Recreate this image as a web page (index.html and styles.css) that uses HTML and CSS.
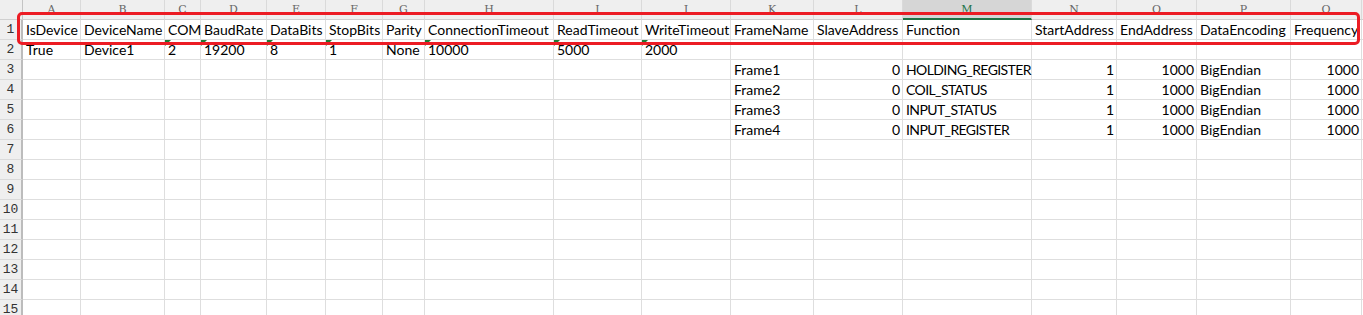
FILE: index.html
```html
<!DOCTYPE html>
<html>
<head>
<meta charset="utf-8">
<link rel="stylesheet" href="styles.css">
</head>
<body>
<div class="sheet">
  <div class="grid">
    <div class="corner"></div>
    <div class="h">A</div><div class="h">B</div><div class="h">C</div><div class="h">D</div><div class="h">E</div><div class="h">F</div><div class="h">G</div><div class="h">H</div><div class="h">I</div><div class="h">J</div><div class="h">K</div><div class="h">L</div><div class="h sel">M</div><div class="h">N</div><div class="h">O</div><div class="h">P</div><div class="h">Q</div><div class="h"></div>

    <div class="r">1</div>
    <div class="c">IsDevice</div><div class="c">DeviceName</div><div class="c">COM</div><div class="c">BaudRate</div><div class="c">DataBits</div><div class="c">StopBits</div><div class="c">Parity</div><div class="c">ConnectionTimeout</div><div class="c">ReadTimeout</div><div class="c">WriteTimeout</div><div class="c">FrameName</div><div class="c">SlaveAddress</div><div class="c">Function</div><div class="c">StartAddress</div><div class="c">EndAddress</div><div class="c">DataEncoding</div><div class="c">Frequency</div><div class="c"></div>

    <div class="r">2</div>
    <div class="c">True</div><div class="c">Device1</div><div class="c t">2</div><div class="c t">19200</div><div class="c t">8</div><div class="c t">1</div><div class="c">None</div><div class="c t">10000</div><div class="c t">5000</div><div class="c t">2000</div><div class="c"></div><div class="c"></div><div class="c"></div><div class="c"></div><div class="c"></div><div class="c"></div><div class="c"></div><div class="c"></div>

    <div class="r">3</div>
    <div class="c"></div><div class="c"></div><div class="c"></div><div class="c"></div><div class="c"></div><div class="c"></div><div class="c"></div><div class="c"></div><div class="c"></div><div class="c"></div><div class="c">Frame1</div><div class="c n">0</div><div class="c fn">HOLDING_REGISTER</div><div class="c n">1</div><div class="c n">1000</div><div class="c">BigEndian</div><div class="c n">1000</div><div class="c"></div>

    <div class="r">4</div>
    <div class="c"></div><div class="c"></div><div class="c"></div><div class="c"></div><div class="c"></div><div class="c"></div><div class="c"></div><div class="c"></div><div class="c"></div><div class="c"></div><div class="c">Frame2</div><div class="c n">0</div><div class="c fn">COIL_STATUS</div><div class="c n">1</div><div class="c n">1000</div><div class="c">BigEndian</div><div class="c n">1000</div><div class="c"></div>

    <div class="r">5</div>
    <div class="c"></div><div class="c"></div><div class="c"></div><div class="c"></div><div class="c"></div><div class="c"></div><div class="c"></div><div class="c"></div><div class="c"></div><div class="c"></div><div class="c">Frame3</div><div class="c n">0</div><div class="c fn">INPUT_STATUS</div><div class="c n">1</div><div class="c n">1000</div><div class="c">BigEndian</div><div class="c n">1000</div><div class="c"></div>

    <div class="r">6</div>
    <div class="c"></div><div class="c"></div><div class="c"></div><div class="c"></div><div class="c"></div><div class="c"></div><div class="c"></div><div class="c"></div><div class="c"></div><div class="c"></div><div class="c">Frame4</div><div class="c n">0</div><div class="c fn">INPUT_REGISTER</div><div class="c n">1</div><div class="c n">1000</div><div class="c">BigEndian</div><div class="c n">1000</div><div class="c"></div>

    <div class="r">7</div>
    <div class="c"></div><div class="c"></div><div class="c"></div><div class="c"></div><div class="c"></div><div class="c"></div><div class="c"></div><div class="c"></div><div class="c"></div><div class="c"></div><div class="c"></div><div class="c"></div><div class="c"></div><div class="c"></div><div class="c"></div><div class="c"></div><div class="c"></div><div class="c"></div>

    <div class="r">8</div>
    <div class="c"></div><div class="c"></div><div class="c"></div><div class="c"></div><div class="c"></div><div class="c"></div><div class="c"></div><div class="c"></div><div class="c"></div><div class="c"></div><div class="c"></div><div class="c"></div><div class="c"></div><div class="c"></div><div class="c"></div><div class="c"></div><div class="c"></div><div class="c"></div>

    <div class="r">9</div>
    <div class="c"></div><div class="c"></div><div class="c"></div><div class="c"></div><div class="c"></div><div class="c"></div><div class="c"></div><div class="c"></div><div class="c"></div><div class="c"></div><div class="c"></div><div class="c"></div><div class="c"></div><div class="c"></div><div class="c"></div><div class="c"></div><div class="c"></div><div class="c"></div>

    <div class="r">10</div>
    <div class="c"></div><div class="c"></div><div class="c"></div><div class="c"></div><div class="c"></div><div class="c"></div><div class="c"></div><div class="c"></div><div class="c"></div><div class="c"></div><div class="c"></div><div class="c"></div><div class="c"></div><div class="c"></div><div class="c"></div><div class="c"></div><div class="c"></div><div class="c"></div>

    <div class="r">11</div>
    <div class="c"></div><div class="c"></div><div class="c"></div><div class="c"></div><div class="c"></div><div class="c"></div><div class="c"></div><div class="c"></div><div class="c"></div><div class="c"></div><div class="c"></div><div class="c"></div><div class="c"></div><div class="c"></div><div class="c"></div><div class="c"></div><div class="c"></div><div class="c"></div>

    <div class="r">12</div>
    <div class="c"></div><div class="c"></div><div class="c"></div><div class="c"></div><div class="c"></div><div class="c"></div><div class="c"></div><div class="c"></div><div class="c"></div><div class="c"></div><div class="c"></div><div class="c"></div><div class="c"></div><div class="c"></div><div class="c"></div><div class="c"></div><div class="c"></div><div class="c"></div>

    <div class="r">13</div>
    <div class="c"></div><div class="c"></div><div class="c"></div><div class="c"></div><div class="c"></div><div class="c"></div><div class="c"></div><div class="c"></div><div class="c"></div><div class="c"></div><div class="c"></div><div class="c"></div><div class="c"></div><div class="c"></div><div class="c"></div><div class="c"></div><div class="c"></div><div class="c"></div>

    <div class="r">14</div>
    <div class="c"></div><div class="c"></div><div class="c"></div><div class="c"></div><div class="c"></div><div class="c"></div><div class="c"></div><div class="c"></div><div class="c"></div><div class="c"></div><div class="c"></div><div class="c"></div><div class="c"></div><div class="c"></div><div class="c"></div><div class="c"></div><div class="c"></div><div class="c"></div>

    <div class="r">15</div>
    <div class="c"></div><div class="c"></div><div class="c"></div><div class="c"></div><div class="c"></div><div class="c"></div><div class="c"></div><div class="c"></div><div class="c"></div><div class="c"></div><div class="c"></div><div class="c"></div><div class="c"></div><div class="c"></div><div class="c"></div><div class="c"></div><div class="c"></div><div class="c"></div>
  </div>
  <div class="highlight"></div>
</div>
</body>
</html>
```

FILE: styles.css
```css
html, body {
  margin: 0;
  padding: 0;
  background: #ffffff;
  overflow: hidden;
}

.sheet {
  position: relative;
  width: 1363px;
  height: 315px;
  overflow: hidden;
}

.grid {
  display: grid;
  grid-template-columns: 23px 58px 84px 36px 66px 59px 57px 42px 129px 88px 89px 83px 89px 129px 85px 80px 94px 71px 40px;
  grid-auto-rows: 20px;
  font-family: "Lato", "Liberation Sans", sans-serif;
  font-size: 14px;
  color: #000;
}

.corner {
  background: #efefef;
  border-right: 1px solid #c4c4c4;
  border-bottom: 1px solid #d0d0d0;
  box-sizing: border-box;
}

.h {
  box-sizing: border-box;
  background: #efefef;
  border-right: 1px solid #dadada;
  border-bottom: 1px solid #d0d0d0;
  font-family: "DejaVu Serif", "Liberation Serif", serif;
  font-size: 11px;
  color: #666;
  text-align: center;
  line-height: 20px;
}

.h.sel {
  background: #d6d6d6;
  color: #217346;
  border-bottom: 2px solid #217346;
}

.r {
  box-sizing: border-box;
  background: #efefef;
  border-right: 2px solid #bcbcbc;
  border-bottom: 1px solid #dadada;
  font-family: "Liberation Mono", monospace;
  font-size: 13px;
  color: #333;
  text-align: center;
  line-height: 20px;
}

.c {
  position: relative;
  box-sizing: border-box;
  border-right: 1px solid #dedede;
  border-bottom: 1px solid #dedede;
  padding: 0 3px 0 3px;
  line-height: 20px;
  white-space: nowrap;
  overflow: visible;
}

.c.fn {
  letter-spacing: -0.6px;
}

.c.n {
  text-align: right;
  padding-right: 2px;
}

.c.t::before {
  content: "";
  position: absolute;
  left: 0;
  top: 0;
  width: 0;
  height: 0;
  border-top: 6px solid #1e7b34;
  border-right: 6px solid transparent;
}

.highlight {
  position: absolute;
  left: 17px;
  top: 12px;
  width: 1343px;
  height: 33px;
  box-sizing: border-box;
  border: 3px solid #ec1c24;
  border-radius: 5px;
  pointer-events: none;
}
```
